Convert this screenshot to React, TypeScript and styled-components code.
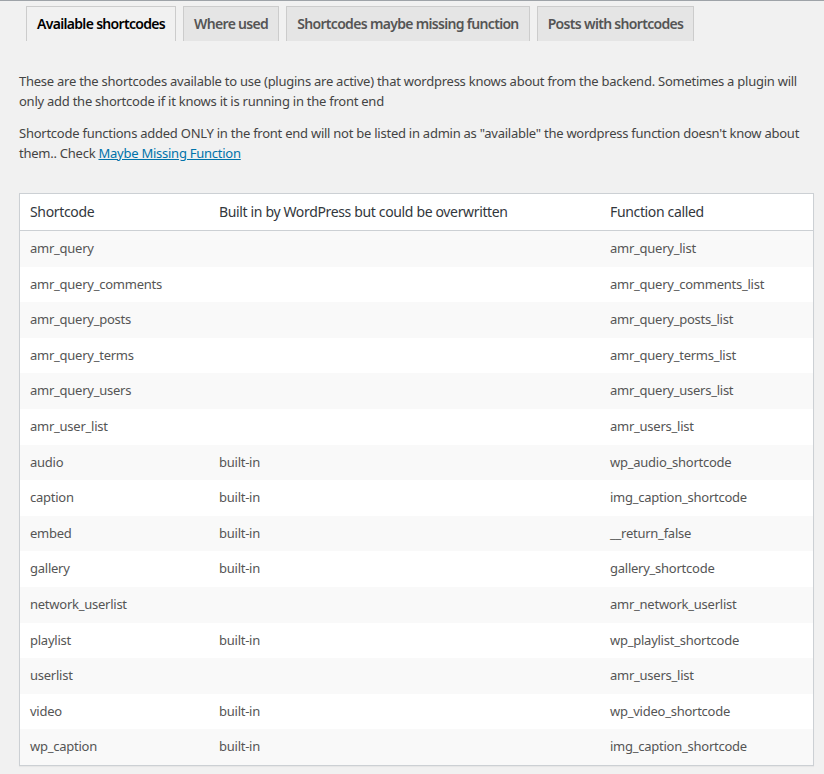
import React from "react";
import styled, { createGlobalStyle } from "styled-components";

const GlobalStyle = createGlobalStyle`
  html, body {
    margin: 0;
    padding: 0;
    background: #f1f1f1;
  }
  body {
    font-family: "Noto Sans", "Open Sans", sans-serif;
    font-size: 13px;
    color: #444;
  }
`;

const Page = styled.div`
  border-top: 1px solid #9ea3a8;
  padding: 5px 10px 10px 19px;
`;

const TabBar = styled.nav`
  display: flex;
  gap: 7px;
  padding-left: 7px;
`;

const Tab = styled.a<{ $active?: boolean }>`
  display: block;
  font-size: 14px;
  font-weight: 600;
  letter-spacing: -0.68px;
  line-height: 24px;
  padding: 5px 10px 5px;
  border: 1px solid #ccc;
  border-bottom: none;
  background: ${(p) => (p.$active ? "#f1f1f1" : "#e5e5e5")};
  color: ${(p) => (p.$active ? "#000" : "#555")};
  text-decoration: none;
  white-space: nowrap;
`;

const Intro = styled.div`
  padding-top: 18px;
  padding-bottom: 18px;
`;

const Para = styled.p`
  margin: 12px 0;
  line-height: 20px;
  letter-spacing: -0.25px;
  color: #444;
`;

const Link = styled.a`
  color: #0073aa;
  text-decoration: underline;
`;

const Table = styled.table`
  width: 100%;
  border-collapse: collapse;
  border: 1px solid #ccd0d4;
  background: #fff;
  box-shadow: 0 1px 1px rgba(0, 0, 0, 0.04);
  table-layout: fixed;
`;

const Th = styled.th<{ $w?: number }>`
  width: ${(p) => (p.$w ? `${p.$w}px` : "auto")};
  text-align: left;
  font-weight: 400;
  font-size: 14px;
  letter-spacing: -0.35px;
  line-height: 20px;
  padding: 8px 10px;
  color: #32373c;
  border-bottom: 1px solid #ccd0d4;
`;

const Row = styled.tr<{ $alt: boolean }>`
  background: ${(p) => (p.$alt ? "#f9f9f9" : "#fff")};
`;

const Td = styled.td`
  padding: 8px 10px;
  line-height: 19.6px;
  font-size: 13px;
  letter-spacing: -0.25px;
  color: #555;
  vertical-align: top;
`;

const rows: [string, string, string][] = [
  ["amr_query", "", "amr_query_list"],
  ["amr_query_comments", "", "amr_query_comments_list"],
  ["amr_query_posts", "", "amr_query_posts_list"],
  ["amr_query_terms", "", "amr_query_terms_list"],
  ["amr_query_users", "", "amr_query_users_list"],
  ["amr_user_list", "", "amr_users_list"],
  ["audio", "built-in", "wp_audio_shortcode"],
  ["caption", "built-in", "img_caption_shortcode"],
  ["embed", "built-in", "__return_false"],
  ["gallery", "built-in", "gallery_shortcode"],
  ["network_userlist", "", "amr_network_userlist"],
  ["playlist", "built-in", "wp_playlist_shortcode"],
  ["userlist", "", "amr_users_list"],
  ["video", "built-in", "wp_video_shortcode"],
  ["wp_caption", "built-in", "img_caption_shortcode"],
];

export default function App() {
  return (
    <>
      <GlobalStyle />
      <Page>
        <TabBar>
          <Tab $active>Available shortcodes</Tab>
          <Tab>Where used</Tab>
          <Tab>Shortcodes maybe missing function</Tab>
          <Tab>Posts with shortcodes</Tab>
        </TabBar>
        <Intro>
          <Para>
            These are the shortcodes available to use (plugins are active) that wordpress knows about from the
            backend. Sometimes a plugin will only add the shortcode if it knows it is running in the front end
          </Para>
          <Para>
            Shortcode functions added ONLY in the front end will not be listed in admin as "available" the
            wordpress function doesn't know about them.. Check <Link href="#">Maybe Missing Function</Link>
          </Para>
        </Intro>
        <Table>
          <thead>
            <tr>
              <Th $w={169}>Shortcode</Th>
              <Th $w={371}>Built in by WordPress but could be overwritten</Th>
              <Th>Function called</Th>
            </tr>
          </thead>
          <tbody>
            {rows.map((r, i) => (
              <Row key={r[0]} $alt={i % 2 === 0}>
                <Td>{r[0]}</Td>
                <Td>{r[1]}</Td>
                <Td>{r[2]}</Td>
              </Row>
            ))}
          </tbody>
        </Table>
      </Page>
    </>
  );
}
